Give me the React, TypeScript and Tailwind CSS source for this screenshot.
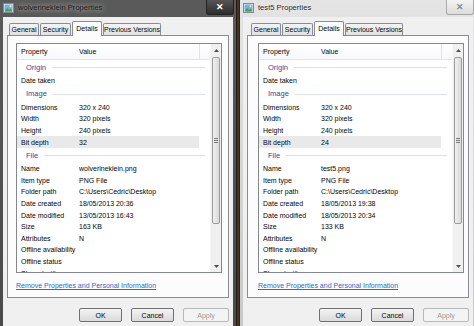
import React from "react";

type Info = {
  title: string;
  bitDepth: string;
  name: string;
  created: string;
  modified: string;
  size: string;
  active: boolean;
};

type Row = { g?: string; p?: string; v?: string; hl?: boolean };

const LEFT: Info = {
  title: "wolverineklein Properties",
  bitDepth: "32",
  name: "wolverineklein.png",
  created: "18/05/2013 20:36",
  modified: "13/05/2013 16:43",
  size: "163 KB",
  active: true,
};

const RIGHT: Info = {
  title: "test5 Properties",
  bitDepth: "24",
  name: "test5.png",
  created: "18/05/2013 19:38",
  modified: "18/05/2013 20:34",
  size: "133 KB",
  active: false,
};

function rows(d: Info): Row[] {
  return [
    { g: "Origin" },
    { p: "Date taken" },
    { g: "Image" },
    { p: "Dimensions", v: "320 x 240" },
    { p: "Width", v: "320 pixels" },
    { p: "Height", v: "240 pixels" },
    { p: "Bit depth", v: d.bitDepth, hl: true },
    { g: "File" },
    { p: "Name", v: d.name },
    { p: "Item type", v: "PNG File" },
    { p: "Folder path", v: "C:\\Users\\Cedric\\Desktop" },
    { p: "Date created", v: d.created },
    { p: "Date modified", v: d.modified },
    { p: "Size", v: d.size },
    { p: "Attributes", v: "N" },
    { p: "Offline availability" },
    { p: "Offline status" },
    { p: "Shared with" },
  ];
}

function PicIcon() {
  return (
    <svg width="11" height="10" viewBox="0 0 11 10" className="shrink-0">
      <rect x="0.5" y="0.5" width="10" height="9" fill="#f4f4f4" stroke="#7a8a96" />
      <rect x="1.5" y="1.5" width="8" height="7" fill="#6fb3e6" />
      <path d="M1.5 8.5 L4 5 L6 7 L7.5 5.5 L9.5 8.5 Z" fill="#4f9a3a" />
      <circle cx="7.5" cy="3.3" r="1" fill="#fff6a0" />
    </svg>
  );
}

function Arrow({ up }: { up?: boolean }) {
  return (
    <svg width="5" height="3" viewBox="0 0 5 3">
      <path d={up ? "M0 3 L2.5 0 L5 3 Z" : "M0 0 L2.5 3 L5 0 Z"} fill="#4d4d4d" />
    </svg>
  );
}

function ListView({ d, ml }: { d: Info; ml: string }) {
  return (
    <div className={`${ml} mt-[7px] w-[206px] h-[230px] border border-[#828790] bg-white flex`}>
      <div className="w-[193px] flex flex-col">
        <div className="h-[16px] shrink-0 flex items-center border-b border-[#e5e5e5] bg-gradient-to-b from-white to-[#f7f8fa]">
          <div className="w-[62px] pl-[4px]">Property</div>
          <div className="w-[120px]">Value</div>
          <div className="w-px h-full bg-[#e3e3e3]" />
        </div>
        <div className="flex-1 overflow-hidden">
          {rows(d).map((r, i) =>
            r.g ? (
              <div key={i} className="h-[15px] flex items-center pl-[9px] pr-[5px]">
                <span className="text-[#2b4a9c] text-[7.5px]">{r.g}</span>
                <div className="flex-1 h-px ml-[6px] bg-[#d9e0ea]" />
              </div>
            ) : (
              <div
                key={i}
                className={`h-[11.6px] w-[182px] flex items-center ${r.hl ? "bg-[#e9e9e9]" : ""}`}
              >
                <div className="w-[62px] pl-[4px] whitespace-nowrap">{r.p}</div>
                <div className="whitespace-nowrap">{r.v}</div>
              </div>
            )
          )}
        </div>
      </div>
      <div className="w-[11px] flex flex-col bg-[#f0f0f0] border-l border-[#f7f7f7]">
        <div className="h-[12px] flex items-center justify-center">
          <Arrow up />
        </div>
        <div className="mt-[1px] mx-[1px] h-[167px] rounded-[2px] border border-[#9c9c9c] bg-gradient-to-r from-[#f0f0f0] to-[#d9d9d9] flex flex-col items-center justify-center gap-[1px]">
          <div className="w-[4px] h-px bg-[#7a7a7a]" />
          <div className="w-[4px] h-px bg-[#7a7a7a]" />
          <div className="w-[4px] h-px bg-[#7a7a7a]" />
        </div>
        <div className="flex-1" />
        <div className="h-[12px] flex items-center justify-center">
          <Arrow />
        </div>
      </div>
    </div>
  );
}

function Tab({ label, w, sel }: { label: string; w: string; sel?: boolean }) {
  return sel ? (
    <div
      className={`${w} h-[15px] -mb-px relative z-10 border border-b-0 border-[#898c95] rounded-t-[2px] bg-[#fcfcfc] flex items-center justify-center pb-[2px] whitespace-nowrap`}
    >
      {label}
    </div>
  ) : (
    <div
      className={`${w} h-[12px] border border-b-0 border-[#898c95] rounded-t-[2px] bg-gradient-to-b from-[#f3f3f3] to-[#e2e2e2] flex items-center justify-center whitespace-nowrap`}
    >
      {label}
    </div>
  );
}

function Btn({ label, w, disabled }: { label: string; w: string; disabled?: boolean }) {
  return (
    <div
      className={`${w} h-[14px] rounded-[2px] border flex items-center justify-center ${
        disabled
          ? "border-[#b5b9bc] bg-[#f4f4f4] text-[#9a9a9a]"
          : "border-[#707070] bg-gradient-to-b from-[#f4f4f4] to-[#dadada]"
      }`}
    >
      {label}
    </div>
  );
}

function Window({ d, tabMl, listMl }: { d: Info; tabMl: string; listMl: string }) {
  return (
    <div
      className={`h-full flex flex-col px-[3px] ${
        d.active
          ? "bg-gradient-to-b from-[#5a5a5a] to-[#4a4a4a]"
          : "bg-gradient-to-b from-[#e4e4e4] to-[#c9c9c9]"
      }`}
    >
      <div className="h-[17px] shrink-0 flex items-start">
        <div className="flex items-center gap-[4px] pt-[3px] flex-1 min-w-0">
          <PicIcon />
          <span
            className={`text-[7.6px] whitespace-nowrap ${
              d.active
                ? "text-[#1b1b1b] [text-shadow:0_0_5px_rgba(255,255,255,0.85)]"
                : "text-[#2a2a2a] [text-shadow:0_0_5px_rgba(255,255,255,0.9)]"
            }`}
          >
            {d.title}
          </span>
        </div>
        <div
          className={`w-[28px] h-[15px] -mr-[1px] rounded-b-[3px] border border-t-0 flex items-center justify-center text-[9px] font-bold ${
            d.active
              ? "bg-gradient-to-b from-[#555] to-[#2e2e2e] border-[#222] text-white"
              : "bg-gradient-to-b from-[#f4f4f4] to-[#dcdcdc] border-[#a8a8a8] text-[#8a8a8a]"
          }`}
        >
          ✕
        </div>
      </div>
      <div className="flex-1 bg-[#f0f0f0] px-[4px] pt-[4px] flex flex-col">
        <div className={`h-[14px] flex items-end gap-px ${tabMl}`}>
          <Tab label="General" w="w-[30px]" />
          <Tab label="Security" w="w-[31px]" />
          <Tab label="Details" w="w-[30px]" sel />
          <Tab label="Previous Versions" w="w-[58px]" />
        </div>
        <div className="h-[263px] border border-[#898c95] bg-[#fcfcfc] flex flex-col">
          <ListView d={d} ml={listMl} />
          <div className={`${listMl} mt-[9px] text-[#2e6bc5] underline`}>
            Remove Properties and Personal Information
          </div>
        </div>
        <div className="mt-[10px] flex justify-end gap-[9px]">
          <Btn label="OK" w="w-[43px]" />
          <Btn label="Cancel" w="w-[43px]" />
          <Btn label="Apply" w="w-[46px]" disabled />
        </div>
      </div>
    </div>
  );
}

export default function App() {
  return (
    <div className="w-[474px] h-[326px] overflow-hidden flex bg-[#1c1814] text-[7px] leading-none text-[#050505] font-['Liberation_Sans',Arial,sans-serif]">
      <div className="w-[236px] shrink-0">
        <Window d={LEFT} tabMl="ml-[2px]" listMl="ml-[8px]" />
      </div>
      <div className="w-[4px] shrink-0 bg-gradient-to-r from-[#121212] via-[#5a3d22] to-[#1a1a1a]" />
      <div className="w-[236px] shrink-0">
        <Window d={RIGHT} tabMl="ml-[4px]" listMl="ml-[10px]" />
      </div>
    </div>
  );
}
